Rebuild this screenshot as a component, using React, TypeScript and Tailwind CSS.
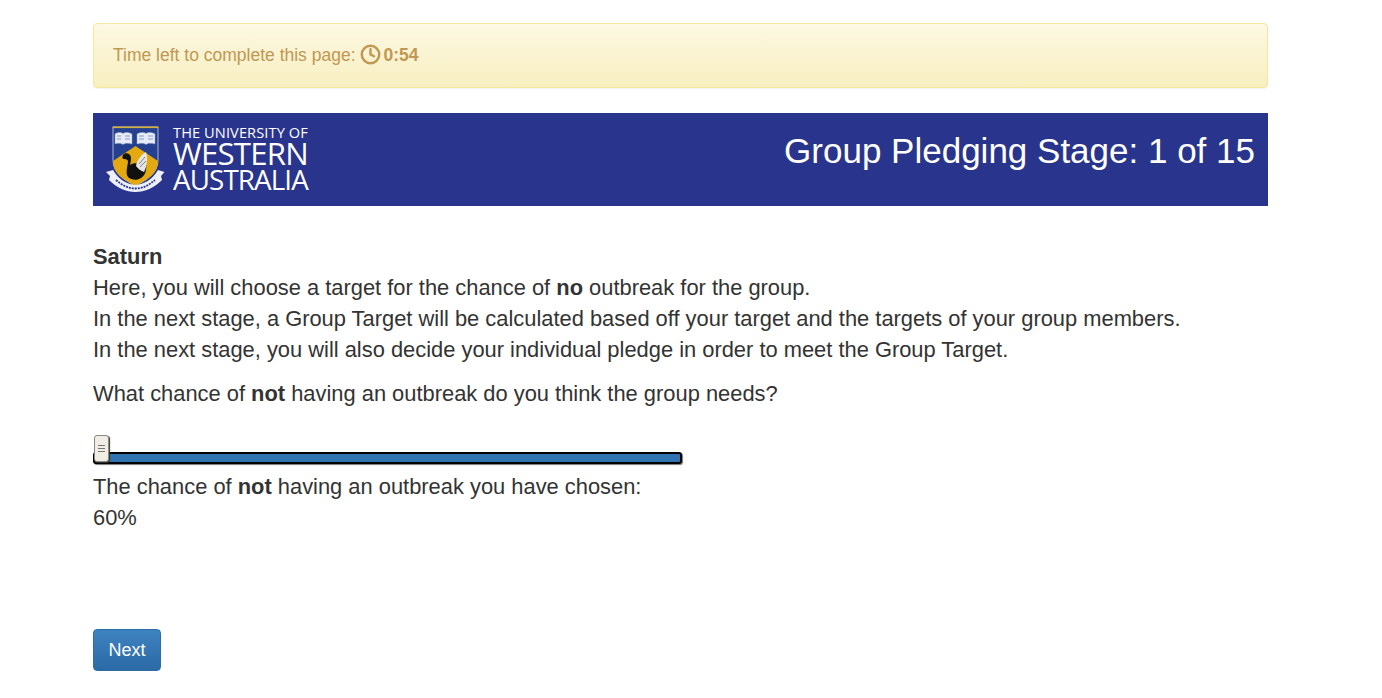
import { Clock } from "lucide-react";

// ── Logo ──────────────────────────────────────────────────────────

function Crest() {
  return (
    <svg width="60" height="68" viewBox="0 0 60 68" className="shrink-0">
      {/* Shield */}
      <path d="M7 1 H52 V34 C52 48 40 54 29.5 60 C19 54 7 48 7 34 Z" fill="#24408f" stroke="#cdd3e6" strokeWidth="0.8" />
      <rect x="6.5" y="0.5" width="46" height="1.6" fill="#d3ae3a" />
      {/* Gold diamond */}
      <path d="M29.5 20 L52 35 C52 48 40 54 29.5 60 C19 54 7 48 7 35 Z" fill="#e3a90f" />
      {/* Books */}
      <g fill="#e6ebf6" stroke="#8ea0cf" strokeWidth="0.5">
        <path d="M9 8 C11 6 15 6 17 7.5 C19 6 23 6 26 8 V18 C23 17 19 17 17 18.5 C15 17 11 17 9 18 Z" />
        <path d="M31 8 C34 6 38 6 40 7.5 C42 6 46 6 49 8 V18 C46 17 42 17 40 18.5 C38 17 34 17 31 18 Z" />
      </g>
      <g stroke="#5f76b4" strokeWidth="0.7">
        <path d="M11 10 H15 M11 13 H15 M19 10 H24 M19 13 H24 M33 10 H38 M33 13 H38 M42 10 H47 M42 13 H47" />
      </g>
      {/* Swan */}
      <path d="M17 33 C15 29 19 26 23 28 C26 30 25 35 24 39 C27 37 30 37 33 38 L40 37 C41 44 39 50 35 52 C31 55 25 54 22 51 C19 47 22 39 22 35 C21 33 19 33 17 33 Z" fill="#111" />
      <path d="M30 40 C31 34 35 29 40 26 C42 32 41 40 38 46 C35 45 32 43 30 40 Z" fill="#e6e6e6" />
      <path d="M33 38 L39 31 M34 41 L40 35" stroke="#555" strokeWidth="0.7" />
      {/* Ribbon */}
      <path d="M0 46 L7 44 C13 54 21 58 29.5 59 C38 58 46 54 52 44 L58.5 46 L55 50 L56 54 C48 62 39 66 29.5 66 C20 66 11 62 3 54 L4 50 Z" fill="#eef0f7" />
      <path d="M10 54 C17 60 23 62.5 29.5 62.5 C36 62.5 42 60 49 54" fill="none" stroke="#29348c" strokeWidth="1.8" strokeDasharray="2 1" />
    </svg>
  );
}

function Logo() {
  return (
    <div className="flex items-center gap-[7px] pl-[13px]">
      <Crest />
      <div className="flex flex-col font-['Open_Sans',sans-serif] font-medium text-white mb-[3px]">
        <span className="text-[14.6px] leading-[15px] tracking-[0.1px]">THE UNIVERSITY OF</span>
        <span className="text-[31.2px] leading-[27px] tracking-[-0.8px]">WESTERN</span>
        <span className="text-[27.8px] leading-[25px] tracking-[-0.9px]">AUSTRALIA</span>
      </div>
    </div>
  );
}

// ── Slider ────────────────────────────────────────────────────────

function Slider() {
  return (
    <div className="relative w-[589px] h-[29px] mt-[26px]">
      <div className="absolute left-0 right-0 top-[17px] h-[12px] bg-[#2f74b0] border-2 border-black rounded-[3px] shadow-[1px_1px_1px_#777]" />
      <div className="absolute left-[1px] top-0 w-[15px] h-[27px] rounded-[3px] border border-[#8a8a80] bg-[#f1ede4] shadow-[1px_1px_1px_#333] flex flex-col items-center justify-center gap-[2px]">
        <span className="block w-[7px] h-px bg-[#777]" />
        <span className="block w-[7px] h-px bg-[#777]" />
        <span className="block w-[7px] h-px bg-[#777]" />
      </div>
    </div>
  );
}

// ── Page ──────────────────────────────────────────────────────────

export default function App() {
  return (
    <div className="h-[698px] overflow-hidden bg-white font-['Liberation_Sans',Arial,sans-serif] text-[#333] text-[21.88px] leading-[31px]">
      <div className="ml-[93px] w-[1175px] pt-[23px]">
        {/* Timer */}
        <div className="h-[65px] rounded-[4px] border border-[#f5e79e] bg-gradient-to-b from-[#fcf8e3] to-[#f8efc0] shadow-[0_1px_1px_rgba(0,0,0,0.05)] px-[19px] flex items-center text-[#c09853] text-[17.5px]">
          <span>Time left to complete this page:</span>
          <Clock size={21} strokeWidth={2.8} className="ml-[4px] mb-[3px]" />
          <strong className="ml-[3px] font-bold">0:54</strong>
        </div>

        {/* Banner */}
        <div className="mt-[25px] h-[93px] bg-[#29348c] flex items-center justify-between pr-[13px]">
          <Logo />
          <h1 className="text-white text-[35px] leading-[40px] font-normal mb-[17px]">Group Pledging Stage: 1 of 15</h1>
        </div>

        {/* Instructions */}
        <div className="mt-[35px]">
          <p className="font-bold">Saturn</p>
          <p>
            Here, you will choose a target for the chance of <strong>no</strong> outbreak for the group.
          </p>
          <p>In the next stage, a Group Target will be calculated based off your target and the targets of your group members.</p>
          <p>In the next stage, you will also decide your individual pledge in order to meet the Group Target.</p>
        </div>

        <p className="mt-[13px]">
          What chance of <strong>not</strong> having an outbreak do you think the group needs?
        </p>

        <Slider />

        <p className="mt-[7px]">
          The chance of <strong>not</strong> having an outbreak you have chosen:
        </p>
        <p>60%</p>

        <button className="mt-[96px] w-[68px] h-[42px] rounded-[4px] border border-[#2e6da4] bg-gradient-to-b from-[#3e83c1] to-[#2b6aa5] text-white text-[18px] leading-none">
          Next
        </button>
      </div>
    </div>
  );
}
